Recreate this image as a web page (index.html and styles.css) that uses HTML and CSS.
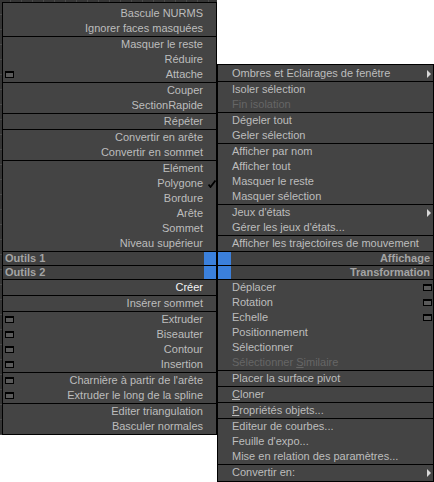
FILE: index.html
```html
<!DOCTYPE html>
<html lang="fr">
<head>
<meta charset="utf-8">
<title>Quad menu</title>
<link rel="stylesheet" href="styles.css">
</head>
<body>
<div class="quad">
  <div class="quad-left">
    <div class="panel panel-left">
      <div class="section first">
        <div class="row"><span class="slot-l"></span><span class="label">Bascule NURMS</span><span class="slot-r"></span></div>
        <div class="row"><span class="slot-l"></span><span class="label">Ignorer faces masquées</span><span class="slot-r"></span></div>
      </div>
      <div class="section">
        <div class="row"><span class="slot-l"></span><span class="label">Masquer le reste</span><span class="slot-r"></span></div>
        <div class="row"><span class="slot-l"></span><span class="label">Réduire</span><span class="slot-r"></span></div>
        <div class="row"><span class="slot-l"><span class="win"></span></span><span class="label">Attache</span><span class="slot-r"></span></div>
      </div>
      <div class="section">
        <div class="row"><span class="slot-l"></span><span class="label">Couper</span><span class="slot-r"></span></div>
        <div class="row"><span class="slot-l"></span><span class="label">SectionRapide</span><span class="slot-r"></span></div>
      </div>
      <div class="section">
        <div class="row"><span class="slot-l"></span><span class="label">Répéter</span><span class="slot-r"></span></div>
      </div>
      <div class="section">
        <div class="row"><span class="slot-l"></span><span class="label">Convertir en arête</span><span class="slot-r"></span></div>
        <div class="row"><span class="slot-l"></span><span class="label">Convertir en sommet</span><span class="slot-r"></span></div>
      </div>
      <div class="section">
        <div class="row"><span class="slot-l"></span><span class="label">Elément</span><span class="slot-r"></span></div>
        <div class="row"><span class="slot-l"></span><span class="label">Polygone</span><span class="slot-r"><svg class="check" width="8" height="8" viewBox="0 0 8 8"><path d="M0.5 4.5 L2.5 7 L7.5 0.5" fill="none" stroke="#000" stroke-width="1.8"/></svg></span></div>
        <div class="row"><span class="slot-l"></span><span class="label">Bordure</span><span class="slot-r"></span></div>
        <div class="row"><span class="slot-l"></span><span class="label">Arête</span><span class="slot-r"></span></div>
        <div class="row"><span class="slot-l"></span><span class="label">Sommet</span><span class="slot-r"></span></div>
        <div class="row"><span class="slot-l"></span><span class="label">Niveau supérieur</span><span class="slot-r"></span></div>
      </div>
      <div class="band band-left"><span class="band-label">Outils 1</span><span class="blue blue-l"></span></div>
      <div class="band band-left"><span class="band-label">Outils 2</span><span class="blue blue-l"></span></div>
      <div class="section">
        <div class="row"><span class="slot-l"></span><span class="label current">Créer</span><span class="slot-r"></span></div>
      </div>
      <div class="section">
        <div class="row"><span class="slot-l"></span><span class="label">Insérer sommet</span><span class="slot-r"></span></div>
      </div>
      <div class="section">
        <div class="row"><span class="slot-l"><span class="win"></span></span><span class="label">Extruder</span><span class="slot-r"></span></div>
        <div class="row"><span class="slot-l"><span class="win"></span></span><span class="label">Biseauter</span><span class="slot-r"></span></div>
        <div class="row"><span class="slot-l"><span class="win"></span></span><span class="label">Contour</span><span class="slot-r"></span></div>
        <div class="row"><span class="slot-l"><span class="win"></span></span><span class="label">Insertion</span><span class="slot-r"></span></div>
      </div>
      <div class="section">
        <div class="row"><span class="slot-l"><span class="win"></span></span><span class="label">Charnière à partir de l'arête</span><span class="slot-r"></span></div>
        <div class="row"><span class="slot-l"><span class="win"></span></span><span class="label">Extruder le long de la spline</span><span class="slot-r"></span></div>
      </div>
      <div class="section">
        <div class="row"><span class="slot-l"></span><span class="label">Editer triangulation</span><span class="slot-r"></span></div>
        <div class="row"><span class="slot-l"></span><span class="label">Basculer normales</span><span class="slot-r"></span></div>
      </div>
    </div>
  </div>

  <div class="quad-right">
    <div class="panel panel-right">
      <div class="section first">
        <div class="row"><span class="label">Ombres et Eclairages de fenêtre</span><span class="slot-r"><span class="arrow"></span></span></div>
      </div>
      <div class="section">
        <div class="row"><span class="label">Isoler sélection</span><span class="slot-r"></span></div>
        <div class="row"><span class="label disabled">Fin isolation</span><span class="slot-r"></span></div>
      </div>
      <div class="section">
        <div class="row"><span class="label">Dégeler tout</span><span class="slot-r"></span></div>
        <div class="row"><span class="label">Geler sélection</span><span class="slot-r"></span></div>
      </div>
      <div class="section">
        <div class="row"><span class="label">Afficher par nom</span><span class="slot-r"></span></div>
        <div class="row"><span class="label">Afficher tout</span><span class="slot-r"></span></div>
        <div class="row"><span class="label">Masquer le reste</span><span class="slot-r"></span></div>
        <div class="row"><span class="label">Masquer sélection</span><span class="slot-r"></span></div>
      </div>
      <div class="section">
        <div class="row"><span class="label">Jeux d'états</span><span class="slot-r"><span class="arrow"></span></span></div>
        <div class="row"><span class="label">Gérer les jeux d'états...</span><span class="slot-r"></span></div>
      </div>
      <div class="section">
        <div class="row"><span class="label">Afficher les trajectoires de mouvement</span><span class="slot-r"></span></div>
      </div>
      <div class="band band-right"><span class="blue blue-r"></span><span class="band-label">Affichage</span></div>
      <div class="band band-right"><span class="blue blue-r"></span><span class="band-label">Transformation</span></div>
      <div class="section">
        <div class="row"><span class="label">Déplacer</span><span class="slot-r"><span class="win"></span></span></div>
        <div class="row"><span class="label">Rotation</span><span class="slot-r"><span class="win"></span></span></div>
        <div class="row"><span class="label">Echelle</span><span class="slot-r"><span class="win"></span></span></div>
        <div class="row"><span class="label">Positionnement</span><span class="slot-r"></span></div>
        <div class="row"><span class="label">Sélectionner</span><span class="slot-r"></span></div>
        <div class="row"><span class="label disabled">Sélectionner <u>S</u>imilaire</span><span class="slot-r"></span></div>
      </div>
      <div class="section">
        <div class="row"><span class="label">Placer la surface pivot</span><span class="slot-r"></span></div>
      </div>
      <div class="section">
        <div class="row"><span class="label"><u>C</u>loner</span><span class="slot-r"></span></div>
      </div>
      <div class="section">
        <div class="row"><span class="label"><u>P</u>ropriétés objets...</span><span class="slot-r"></span></div>
      </div>
      <div class="section">
        <div class="row"><span class="label">Editeur de courbes...</span><span class="slot-r"></span></div>
        <div class="row"><span class="label">Feuille d'expo...</span><span class="slot-r"></span></div>
        <div class="row"><span class="label">Mise en relation des paramètres...</span><span class="slot-r"></span></div>
      </div>
      <div class="section">
        <div class="row"><span class="label">Convertir en:</span><span class="slot-r"><span class="arrow"></span></span></div>
      </div>
    </div>
  </div>
</div>
</body>
</html>
```

FILE: styles.css
```css
html, body {
  margin: 0;
  padding: 0;
  background: #ffffff;
}

body {
  width: 434px;
  height: 482px;
  overflow: hidden;
  font-family: "Liberation Sans", Arial, sans-serif;
  font-size: 11px;
  color: #bdbdbd;
}

.quad {
  display: flex;
  align-items: flex-start;
}

.quad-left {
  width: 215px;
  padding: 2px 0 0 2px;
  background-color: #353535;
  background-image:
    repeating-linear-gradient(to right, transparent 0 10px, #4a4a4a 10px 11px),
    repeating-linear-gradient(to bottom, transparent 0 14px, #4a4a4a 14px 15px);
}

.quad-right {
  width: 217px;
  margin-top: 64px;
}

.panel {
  background: #444444;
  border: 1px solid #000000;
}

.panel-left {
  padding-top: 3px;
}

.panel-right {
  padding: 1px 0;
}

.section {
  border-top: 1px solid #000000;
}

.section.first {
  border-top: none;
}

.row {
  display: flex;
  align-items: center;
  height: 15px;
  line-height: 15px;
  white-space: nowrap;
}

.panel-left .row {
  padding-left: 2px;
}

.panel-left .label {
  flex: 1;
  text-align: right;
}

.panel-left .slot-l {
  width: 9px;
  display: flex;
  align-items: center;
}

.panel-left .slot-r {
  width: 13px;
  display: flex;
  align-items: center;
}

.panel-right .row {
  padding-left: 14px;
  padding-right: 1px;
}

.panel-right .label {
  flex: 1;
}

.panel-right .slot-r {
  width: 9px;
  display: flex;
  align-items: center;
  justify-content: flex-end;
}

.label.current {
  color: #f4f4f4;
}

.label.disabled {
  color: #666666;
}

u {
  text-decoration: underline;
  text-underline-offset: 1px;
}

.win {
  display: block;
  width: 7px;
  height: 4px;
  border: 1px solid #000000;
  border-top-width: 2px;
  background: #5a5a5a;
}

.check {
  display: block;
  margin-left: 5px;
}

.arrow {
  display: block;
  width: 0;
  height: 0;
  border-top: 4px solid transparent;
  border-bottom: 4px solid transparent;
  border-left: 4px solid #d8d8d8;
  margin-right: 1px;
}

.band {
  display: flex;
  align-items: stretch;
  height: 13px;
  border-top: 1px solid #000000;
  background: #404040;
  font-weight: bold;
  color: #a4a4a4;
  line-height: 13px;
  white-space: nowrap;
}

.band-left {
  padding-left: 2px;
}

.band-left .band-label {
  flex: 1;
}

.band-right .band-label {
  flex: 1;
  text-align: right;
  padding-right: 3px;
}

.blue {
  display: block;
  background: #3b80dc;
}

.blue-l {
  width: 12px;
}

.blue-r {
  width: 13px;
}
```
